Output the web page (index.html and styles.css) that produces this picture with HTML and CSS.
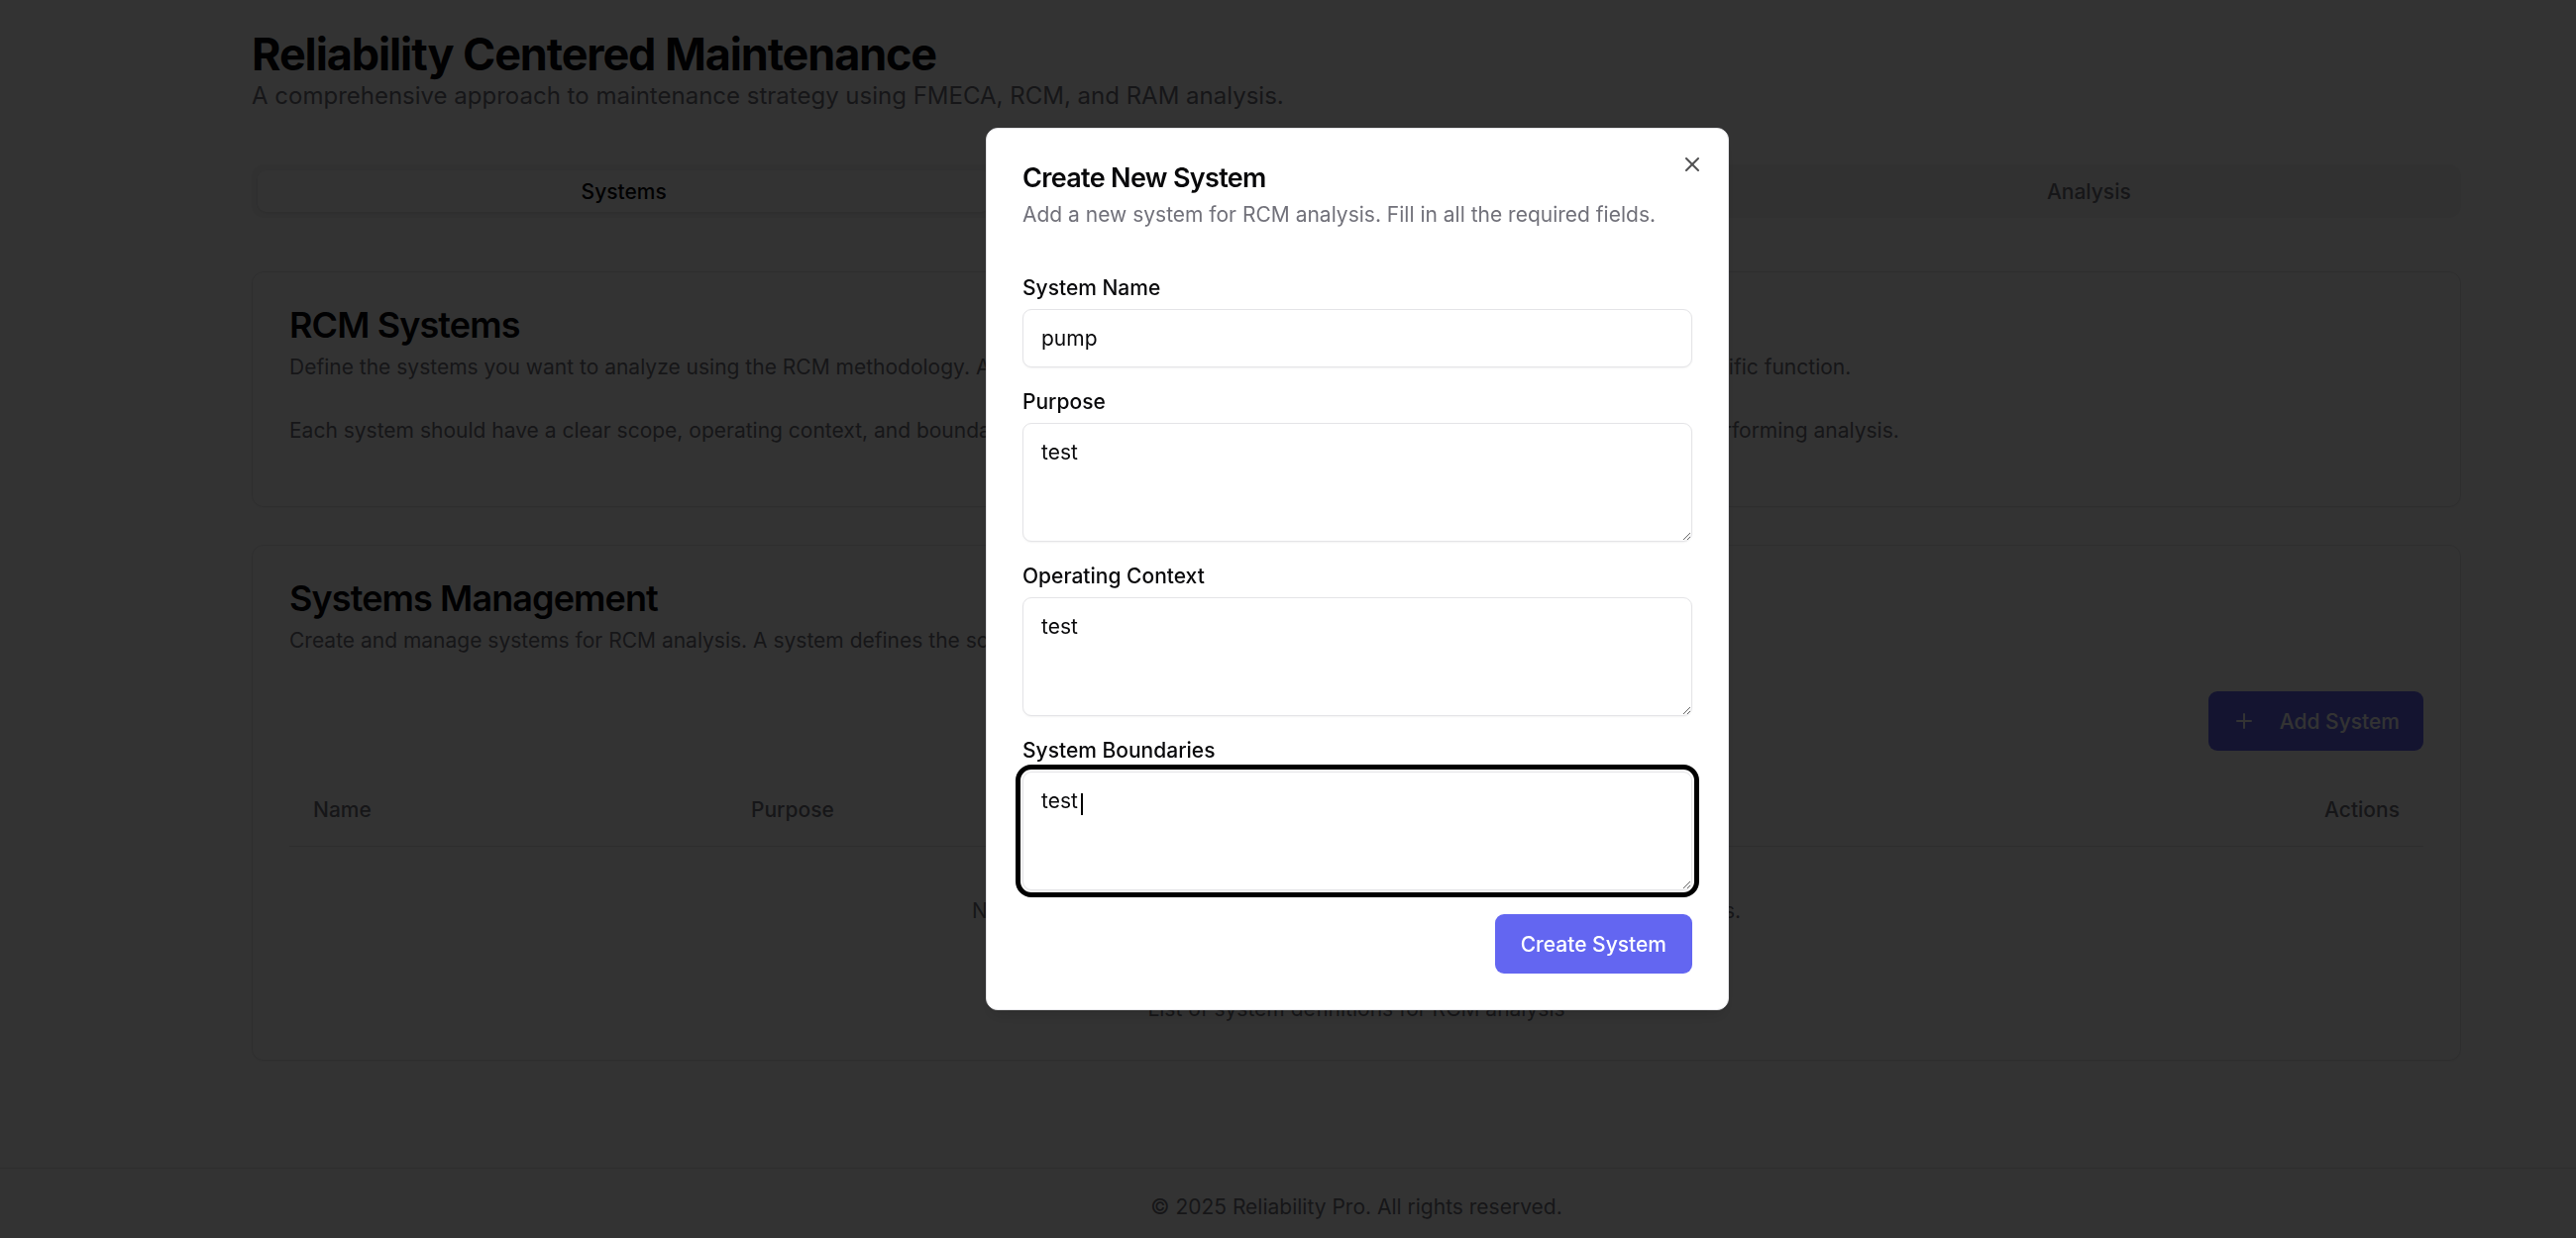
FILE: index.html
```html
<!DOCTYPE html>
<html lang="en">
<head>
<meta charset="utf-8">
<title>Reliability Centered Maintenance</title>
<link rel="stylesheet" href="styles.css">
</head>
<body>
<div class="page">
  <main class="container">
    <header class="page-header">
      <h1 class="page-title">Reliability Centered Maintenance</h1>
      <p class="page-subtitle">A comprehensive approach to maintenance strategy using FMECA, RCM, and RAM analysis.</p>
    </header>

    <nav class="tab-list">
      <button class="tab active">Systems</button>
      <button class="tab">FMECA</button>
      <button class="tab">Analysis</button>
    </nav>

    <section class="card card-intro">
      <h2 class="card-title">RCM Systems</h2>
      <p class="card-desc">Define the systems you want to analyze using the RCM methodology. A system is a collection of components that work together to perform a specific function.</p>
      <p class="card-desc card-desc-spaced">Each system should have a clear scope, operating context, and boundaries. Clearly defining these attributes ensures consistent results prior to performing analysis.</p>
    </section>

    <section class="card card-manage">
      <div class="card-header">
        <h2 class="card-title">Systems Management</h2>
        <p class="card-desc">Create and manage systems for RCM analysis. A system defines the scope and boundaries of your analysis.</p>
      </div>
      <div class="card-content">
        <div class="toolbar">
          <button class="btn btn-primary btn-add">
            <svg class="icon" viewBox="0 0 24 24" fill="none" stroke="currentColor" stroke-width="2" stroke-linecap="round" stroke-linejoin="round"><path d="M5 12h14"/><path d="M12 5v14"/></svg>
            <span>Add System</span>
          </button>
        </div>
        <table class="table">
          <caption class="table-caption">List of system definitions for RCM analysis</caption>
          <colgroup>
            <col class="col-name">
            <col class="col-purpose">
            <col class="col-context">
            <col class="col-bounds">
            <col class="col-actions">
          </colgroup>
          <thead>
            <tr>
              <th>Name</th>
              <th>Purpose</th>
              <th>Operating Context</th>
              <th>Boundaries</th>
              <th class="th-right">Actions</th>
            </tr>
          </thead>
          <tbody>
            <tr>
              <td colspan="5" class="empty-cell">No systems found. Click "Add System" to create your first system for analysis.</td>
            </tr>
          </tbody>
        </table>
      </div>
    </section>
  </main>

  <footer class="footer">
    <div class="footer-inner">© 2025 Reliability Pro. All rights reserved.</div>
  </footer>
</div>

<div class="overlay"></div>

<div class="dialog" role="dialog" aria-labelledby="dlg-title">
  <button class="dialog-close" aria-label="Close">
    <svg viewBox="0 0 24 24" fill="none" stroke="currentColor" stroke-width="2" stroke-linecap="round" stroke-linejoin="round"><path d="M18 6 6 18"/><path d="m6 6 12 12"/></svg>
  </button>
  <div class="dialog-header">
    <h2 class="dialog-title" id="dlg-title">Create New System</h2>
    <p class="dialog-desc">Add a new system for RCM analysis. Fill in all the required fields.</p>
  </div>
  <form class="form">
    <div class="field">
      <label class="label" for="f-name">System Name</label>
      <input class="input" id="f-name" type="text" value="pump">
    </div>
    <div class="field">
      <label class="label" for="f-purpose">Purpose</label>
      <textarea class="textarea" id="f-purpose">test</textarea>
    </div>
    <div class="field">
      <label class="label" for="f-context">Operating Context</label>
      <textarea class="textarea" id="f-context">test</textarea>
    </div>
    <div class="field">
      <label class="label" for="f-bounds">System Boundaries</label>
      <div class="textarea-wrap">
        <textarea class="textarea textarea-focused" id="f-bounds">test</textarea>
        <span class="caret"></span>
      </div>
    </div>
    <div class="dialog-footer">
      <button type="button" class="btn btn-primary btn-submit">Create System</button>
    </div>
  </form>
</div>
</body>
</html>
```

FILE: styles.css
```css
* {
  box-sizing: border-box;
}

html,
body {
  margin: 0;
  padding: 0;
  overflow: hidden;
}

body {
  width: 2600px;
  height: 1250px;
  font-family: Inter, "Noto Sans", "Liberation Sans", sans-serif;
  color: #09090b;
  background: #ffffff;
}

.container {
  width: 2230px;
  margin-left: 254px;
  padding-top: 31px;
}

.page-title {
  margin: 0;
  font-size: 45px;
  line-height: 48px;
  font-weight: 700;
  letter-spacing: -0.025em;
}

.page-subtitle {
  margin: 0;
  font-size: 24px;
  line-height: 36px;
  color: #71717a;
}

.tab-list {
  margin-top: 51px;
  display: grid;
  grid-template-columns: repeat(3, 1fr);
  height: 54px;
  padding: 6px;
  background: #f4f4f5;
  border-radius: 12px;
}

.tab {
  font-family: inherit;
  font-size: 21px;
  font-weight: 500;
  border: 0;
  background: transparent;
  color: #71717a;
  border-radius: 9px;
  padding: 0;
}

.tab.active {
  background: #ffffff;
  color: #09090b;
  box-shadow: 0 1px 3px rgba(0, 0, 0, 0.1);
}

.card {
  background: #ffffff;
  border: 1px solid #e4e4e7;
  border-radius: 12px;
  box-shadow: 0 1px 2px rgba(0, 0, 0, 0.05);
}

.card-intro {
  margin-top: 54px;
  padding: 35px 37px 61px;
}

.card-manage {
  margin-top: 38px;
}

.card-header {
  padding: 35px 37px 36px;
}

.card-content {
  padding: 0 37px 36px;
}

.card-title {
  margin: 0;
  font-size: 36px;
  line-height: 36px;
  font-weight: 600;
  letter-spacing: -0.025em;
}

.card-desc {
  margin: 10px 0 0;
  font-size: 21px;
  line-height: 30px;
  color: #71717a;
  white-space: nowrap;
}

.card-desc-spaced {
  margin-top: 34px;
}

.toolbar {
  display: flex;
  justify-content: flex-end;
}

.btn {
  display: inline-flex;
  align-items: center;
  height: 60px;
  padding: 0 24px;
  border: 0;
  border-radius: 9px;
  font-family: inherit;
  font-size: 21px;
  font-weight: 500;
  cursor: pointer;
}

.btn-primary {
  background: #6366f1;
  color: #ffffff;
}

.btn-add {
  gap: 24px;
}

.btn-submit {
  padding: 0 26px;
}

.icon {
  width: 24px;
  height: 24px;
}

.table {
  width: 100%;
  margin-top: 24px;
  border-collapse: collapse;
  table-layout: fixed;
  font-size: 21px;
  line-height: 30px;
}

.col-name,
.col-purpose {
  width: 442px;
}

.col-context {
  width: 400px;
}

.col-bounds {
  width: 400px;
}

.table th {
  height: 72px;
  padding: 0 24px;
  text-align: left;
  font-weight: 500;
  color: #71717a;
  border-bottom: 1px solid #e4e4e7;
  white-space: nowrap;
}

.table th.th-right {
  text-align: right;
}

.empty-cell {
  height: 126px;
  padding: 5px 24px 0;
  text-align: center;
  vertical-align: middle;
  color: #71717a;
  white-space: nowrap;
}

.table-caption {
  caption-side: bottom;
  margin-top: 24px;
  font-size: 21px;
  line-height: 30px;
  color: #71717a;
}

.footer {
  margin-top: 108px;
  border-top: 1px solid #e4e4e7;
  padding: 24px 0;
}

.footer-inner {
  width: 2230px;
  margin-left: 254px;
  text-align: center;
  font-size: 21px;
  line-height: 30px;
  color: #71717a;
}

.overlay {
  position: fixed;
  inset: 0;
  background: rgba(0, 0, 0, 0.8);
}

.dialog {
  position: fixed;
  left: 995px;
  top: 129px;
  width: 750px;
  padding: 36px;
  background: #ffffff;
  border: 1px solid #e4e4e7;
  border-radius: 12px;
  box-shadow: 0 10px 15px -3px rgba(0, 0, 0, 0.1), 0 4px 6px -4px rgba(0, 0, 0, 0.1);
}

.dialog-close {
  position: absolute;
  top: 24px;
  right: 24px;
  width: 24px;
  height: 24px;
  padding: 0;
  border: 0;
  background: transparent;
  color: #09090b;
  opacity: 0.7;
}

.dialog-close svg {
  width: 24px;
  height: 24px;
  display: block;
}

.dialog-title {
  margin: 0;
  font-size: 27px;
  line-height: 27px;
  font-weight: 600;
  letter-spacing: -0.025em;
}

.dialog-desc {
  margin: 9px 0 0;
  font-size: 21px;
  line-height: 30px;
  color: #71717a;
}

.form {
  margin-top: 48px;
  display: flex;
  flex-direction: column;
  gap: 24px;
}

.field {
  display: flex;
  flex-direction: column;
  gap: 11px;
}

.label {
  font-size: 21px;
  line-height: 21px;
  font-weight: 500;
}

.input,
.textarea {
  width: 100%;
  font-family: inherit;
  font-size: 21px;
  color: #09090b;
  background: #ffffff;
  border: 1px solid #e4e4e7;
  border-radius: 9px;
  box-shadow: 0 1px 2px rgba(0, 0, 0, 0.05);
}

.input {
  height: 59px;
  padding: 0 18px;
}

.textarea {
  display: block;
  height: 120px;
  padding: 14px 18px 10px;
  line-height: 30px;
}

.textarea-focused {
  outline: 5px solid #000000;
  outline-offset: 2px;
}

.textarea-wrap {
  position: relative;
}

.caret {
  position: absolute;
  left: 59px;
  top: 22px;
  width: 2px;
  height: 22px;
  background: #000000;
}

.dialog-footer {
  display: flex;
  justify-content: flex-end;
}
```
